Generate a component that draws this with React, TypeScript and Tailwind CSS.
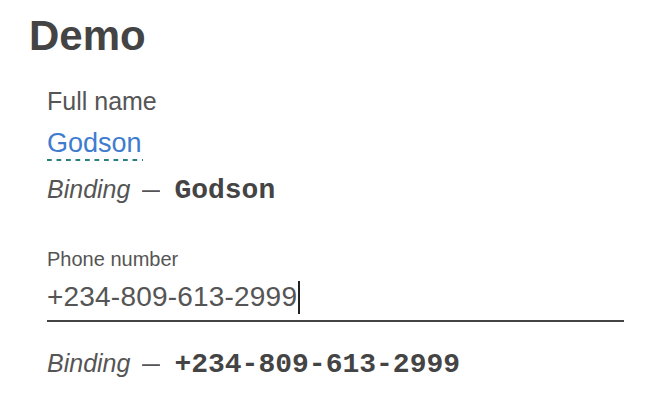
import React from "react";

export default function App() {
  const sans = { fontFamily: '"Liberation Sans", Arial, sans-serif' };
  const mono = { fontFamily: '"Liberation Mono", "Courier New", monospace' };
  return (
    <div className="w-[652px] h-[412px] bg-white text-[#444] pl-[29px] pt-[12px]" style={sans}>
      <h1 className="text-[42px] leading-[48px] font-bold text-[#444]">Demo</h1>
      <div className="ml-[18px]">
        <div className="mt-[26px] text-[25px] leading-[30px] text-[#555]">Full name</div>
        <div className="mt-[11px] inline-flex flex-col w-[96px]">
          <span className="text-[27px] leading-[32px] text-[#3f7ccf]">Godson</span>
          <div className="h-[2px] w-full bg-[linear-gradient(to_right,#2a7f80_5px,transparent_5px)] bg-[length:9.5px_2px] bg-repeat-x"></div>
        </div>
        <div className="mt-[12px] text-[25px] leading-[32px] text-[#555]">
          <span className="italic">Binding</span>
          <span className="inline-block ml-[12px] mr-[14px] w-[18px] scale-x-[0.72] origin-left">—</span>
          <span className="font-bold text-[28px] text-[#444]" style={mono}>Godson</span>
        </div>
        <div className="mt-[40px] w-[577px]">
          <div className="text-[20px] leading-[24px] text-[#555]">Phone number</div>
          <div className="mt-[9px] flex items-center h-[34px] text-[28px] leading-[34px] text-[#555] tracking-[0.2px]">
            <span>+234-809-613-2999</span>
            <span className="inline-block w-[2px] h-[33px] bg-[#222] ml-[1px]"></span>
          </div>
          <div className="mt-[6px] h-[2px] bg-[#444]"></div>
        </div>
        <div className="mt-[25px] text-[25px] leading-[32px] text-[#555]">
          <span className="italic">Binding</span>
          <span className="inline-block ml-[12px] mr-[14px] w-[18px] scale-x-[0.72] origin-left">—</span>
          <span className="font-bold text-[28px] text-[#444]" style={mono}>+234-809-613-2999</span>
        </div>
      </div>
    </div>
  );
}
